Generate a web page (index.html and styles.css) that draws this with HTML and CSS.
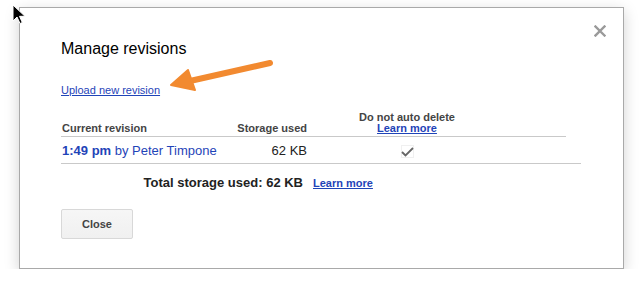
FILE: index.html
```html
<!DOCTYPE html>
<html lang="en">
<head>
    <meta charset="UTF-8">
    <title>Manage revisions</title>
    <link rel="stylesheet" href="styles.css">
</head>
<body>
    <div class="dialog">
        <a class="close-x" href="#" title="Close">
            <svg width="12" height="12" viewBox="0 0 12 12">
                <path d="M1.5 1.5 L10.5 10.5 M10.5 1.5 L1.5 10.5" stroke="#9a9a9a" stroke-width="2.4" stroke-linecap="square"/>
            </svg>
        </a>
        <h1>Manage revisions</h1>
        <a class="upload-link" href="#">Upload new revision</a>

        <table class="revisions">
            <thead>
                <tr>
                    <th class="col-name">Current revision</th>
                    <th class="col-size">Storage used</th>
                    <th class="col-keep">Do not auto delete<br><a href="#">Learn more</a></th>
                    <th></th>
                </tr>
            </thead>
            <tbody>
                <tr>
                    <td class="col-name"><a href="#"><b>1:49 pm</b> by Peter Timpone</a></td>
                    <td class="col-size">62 KB</td>
                    <td class="col-keep"><span class="check">
                        <svg width="13" height="10" viewBox="0 0 13 10">
                            <path d="M1 5 L4.5 8.5 L12 1" fill="none" stroke="#666" stroke-width="1.8"/>
                        </svg>
                    </span></td>
                    <td></td>
                </tr>
            </tbody>
        </table>

        <div class="summary">
            <span class="total">Total storage used: 62 KB</span>
            <a href="#">Learn more</a>
        </div>

        <button type="button">Close</button>
    </div>

    <!-- annotation arrow -->
    <svg class="arrow" width="120" height="40" viewBox="0 0 120 40">
        <path d="M110 6 L30 24" stroke="#f28a30" stroke-width="6" stroke-linecap="round"/>
        <path d="M11 28 L28 13 L35 33 Z" fill="#f28a30" stroke="#f28a30" stroke-width="2" stroke-linejoin="round"/>
    </svg>

    <!-- mouse pointer -->
    <svg class="pointer" width="16" height="22" viewBox="0 0 16 22">
        <path d="M1 1 L1 17 L5 13 L8 19.5 L10.3 18.5 L7.5 12.3 L13 12.3 Z" fill="#000" stroke="#fff" stroke-width="1"/>
    </svg>
</body>
</html>
```

FILE: styles.css
```css
body {
    margin: 0;
    padding: 7px 0 0 19px;
    background: #fff;
    font-family: Arial, "Liberation Sans", sans-serif;
    color: #222;
}
.dialog {
    position: relative;
    box-sizing: border-box;
    width: 605px;
    height: 262px;
    padding: 31px 41px 0;
    background: #fff;
    border: 1px solid #a9a9a9;
    box-shadow: 0 4px 14px rgba(0, 0, 0, 0.18);
}
.close-x {
    position: absolute;
    top: 17px;
    right: 17px;
    display: block;
    line-height: 0;
}
h1 {
    margin: 0;
    font-size: 16px;
    font-weight: normal;
    line-height: 20px;
    color: #000;
}
a {
    color: #1f44b8;
}
.upload-link {
    display: inline-block;
    margin-top: 24px;
    font-size: 11px;
    line-height: 14px;
    color: #1f44b8;
}
.revisions {
    width: 505px;
    margin-top: 14px;
    border-collapse: collapse;
    font-size: 11px;
}
.revisions th {
    padding: 0 0 2px;
    font-weight: bold;
    color: #444;
    line-height: 11px;
    text-align: left;
    vertical-align: bottom;
    border-bottom: 1px solid #c9c9c9;
}
.revisions th a {
    font-weight: bold;
    color: #1f44b8;
}
.revisions td {
    height: 26px;
    padding: 0;
    font-size: 13px;
    vertical-align: middle;
}
.revisions td a {
    text-decoration: none;
    color: #1f44b8;
}
.col-name {
    width: 164px;
    padding-left: 1px !important;
}
.col-size {
    width: 81px;
    padding-right: 24px !important;
    text-align: right !important;
}
.revisions td.col-size {
    color: #222;
}
.col-keep {
    width: 152px;
    text-align: center !important;
}
.check {
    display: inline-block;
    box-sizing: border-box;
    width: 13px;
    height: 13px;
    padding-top: 1px;
    border: 1px solid #f0f0f0;
    line-height: 0;
    vertical-align: middle;
}
.check svg {
    margin-left: -1px;
}
.summary {
    width: 520px;
    border-top: 1px solid #c9c9c9;
    display: flex;
    align-items: baseline;
    padding-top: 11px;
    font-size: 11px;
}
.total {
    width: 242px;
    text-align: right;
    font-size: 13px;
    font-weight: bold;
    color: #222;
}
.summary a {
    margin-left: 10px;
    font-weight: bold;
}
button {
    display: block;
    margin-top: 19px;
    width: 72px;
    height: 30px;
    font-family: inherit;
    font-size: 11px;
    font-weight: bold;
    color: #444;
    background: linear-gradient(#f6f6f6, #f0f0f0);
    border: 1px solid #d8d8d8;
    border-radius: 2px;
}
.arrow {
    position: absolute;
    left: 160px;
    top: 57px;
}
.pointer {
    position: absolute;
    left: 12px;
    top: 4px;
}
```
